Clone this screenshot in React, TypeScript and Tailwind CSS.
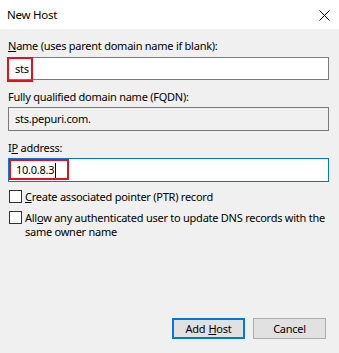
import React from "react";

export default function App() {
  return (
    <div
      className="w-[339px] h-[353px] bg-[#f0f0f0] flex flex-col text-[11px] tracking-[-0.25px] text-black overflow-hidden"
      style={{ fontFamily: '"Noto Sans", "Open Sans", sans-serif' }}
    >
      <div className="h-[29px] bg-white flex items-center justify-between pl-[7px] pr-[9px] shrink-0">
        <span className="text-[11.5px] leading-[16px] mt-[1px]">New Host</span>
        <svg width="11" height="11" viewBox="0 0 11 11" className="mt-[1px]">
          <path d="M0.5 0.5 L10.5 10.5 M10.5 0.5 L0.5 10.5" stroke="#000" strokeWidth="1" />
        </svg>
      </div>
      <div className="flex flex-col px-[8px] pr-[10px] pt-[9px] flex-1">
        <div className="leading-[16px]">
          <span className="underline">N</span>ame (uses parent domain name if blank):
        </div>
        <div className="relative mt-[3px] h-[23px] bg-white border border-[#7a7a7a] flex items-center pl-[6px]">
          <span className="leading-[16px]">sts</span>
          <div className="absolute left-[-2px] top-[-1px] w-[26px] h-[25px] border-2 border-[#e3101e]" />
        </div>
        <div className="leading-[16px] mt-[9px]">Fully qualified domain name (FQDN):</div>
        <div className="mt-[2px] h-[24px] bg-[#f0f0f0] border border-[#7a7a7a] flex items-center pl-[6px]">
          <span className="leading-[16px]">sts.pepuri.com.</span>
        </div>
        <div className="leading-[16px] mt-[9px]">
          I<span className="underline">P</span> address:
        </div>
        <div className="relative mt-[2px] h-[24px] bg-white border border-[#0078d7] flex items-center pl-[7px]">
          <span className="leading-[16px]">10.0.8.3</span>
          <span className="w-[1px] h-[15px] bg-black ml-[1px]" />
          <div className="absolute left-[0px] top-[0px] w-[60px] h-[21px] border-2 border-[#e3101e]" />
        </div>
        <div className="flex items-start mt-[8px]">
          <div className="w-[13px] h-[13px] border border-[#333] bg-white ml-[1px] shrink-0" />
          <div className="ml-[3px] leading-[14px]">
            <span className="underline">C</span>reate associated pointer (PTR) record
          </div>
        </div>
        <div className="flex items-start mt-[7px]">
          <div className="w-[13px] h-[13px] border border-[#333] bg-white ml-[1px] shrink-0" />
          <div className="ml-[3px] leading-[14px]">
            All<span className="underline">o</span>w any authenticated user to update DNS records with the same owner name
          </div>
        </div>
        <div className="flex-1" />
        <div className="flex justify-end gap-[8px] mb-[14px] pr-[3px]">
          <button className="w-[73px] h-[21px] bg-[#e1e1e1] border-2 border-[#0078d7] leading-[15px] flex items-center justify-center">
            Add <span className="underline ml-[3px]">H</span>ost
          </button>
          <button className="w-[73px] h-[21px] bg-[#e1e1e1] border border-[#adadad] leading-[15px] flex items-center justify-center">
            Cancel
          </button>
        </div>
      </div>
    </div>
  );
}
